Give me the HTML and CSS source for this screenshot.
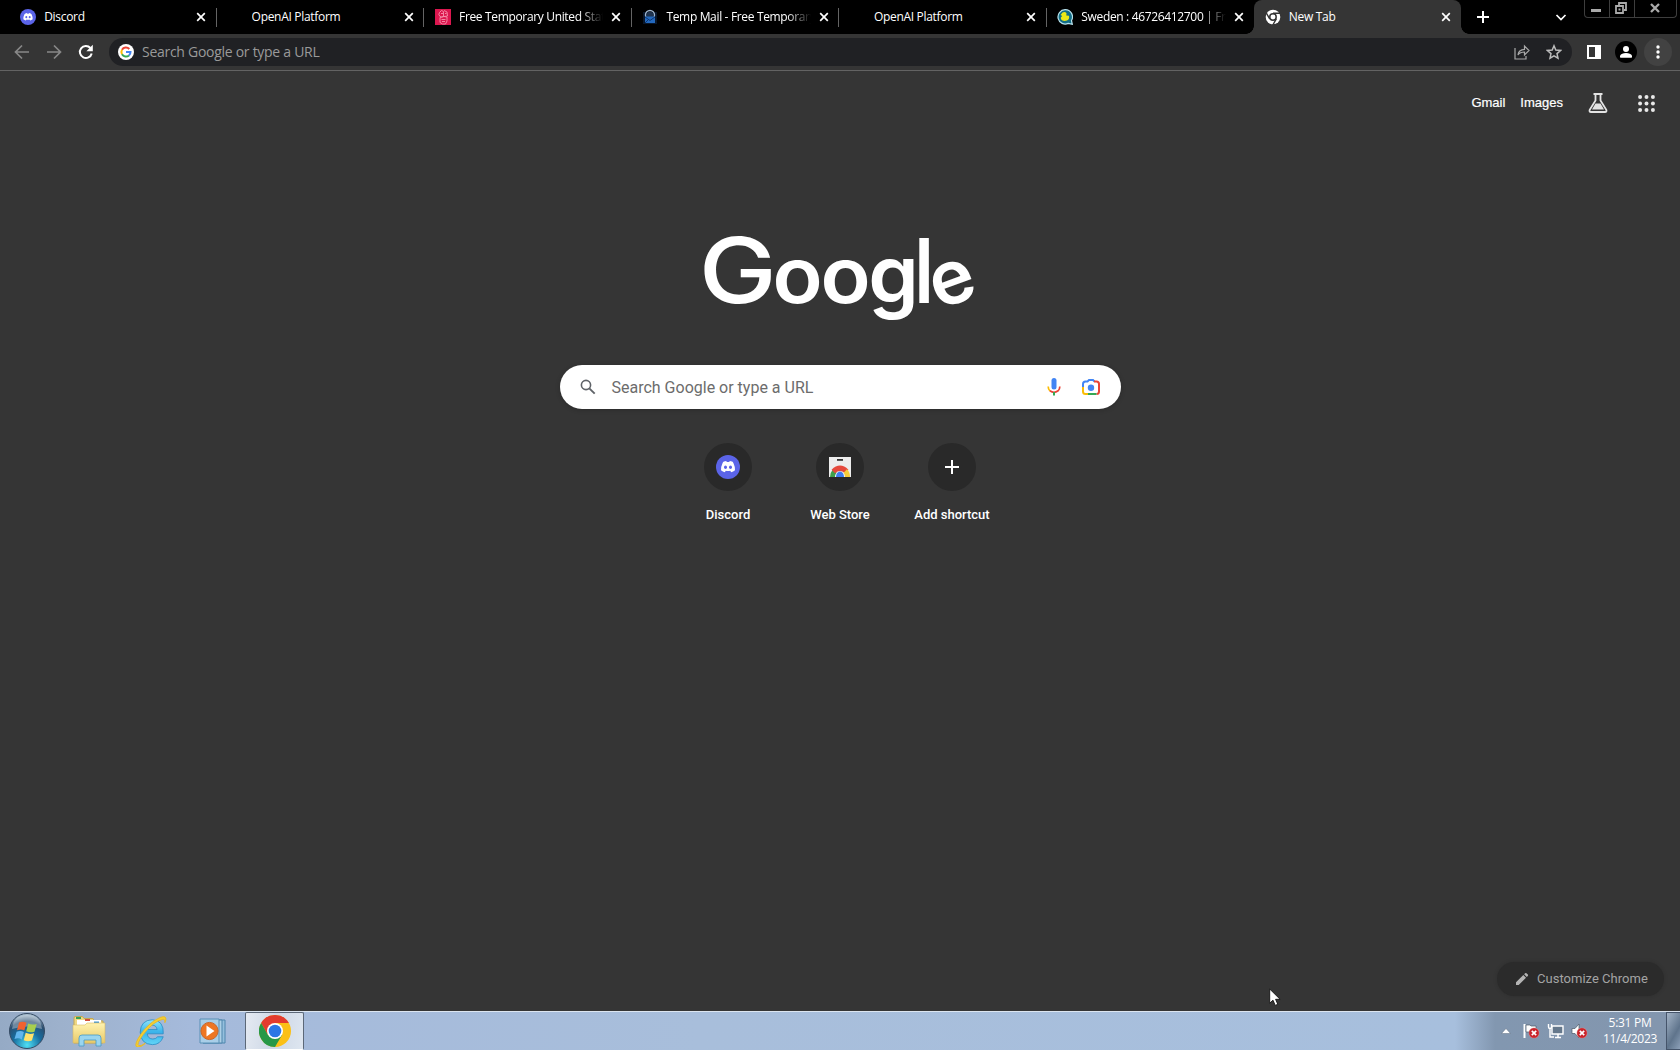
FILE: index.html
```html
<!DOCTYPE html>
<html lang="en">
<head>
<meta charset="utf-8">
<title>New Tab</title>
<link rel="stylesheet" href="styles.css">
</head>
<body>
<svg class="defs" aria-hidden="true">
  <defs>
    <symbol id="discord" viewBox="0 0 24 24">
      <circle cx="12" cy="12" r="12" fill="#5b64e8"/>
      <path fill="#fff" d="M8 6.600 10.200 6l.6 1q1.200-.2 2.400 0l.6-1 2.200.6q1 .4 1.500 1.600 1.700 3.600 1.500 7.100-1.800 1.600-3.800 2l-1-1.600q-2.200.6-4.400 0l-1 1.600q-2-.4-3.800-2-.2-3.500 1.500-7.100Q7 7 8 6.600Z"/>
      <ellipse cx="9.500" cy="12.300" rx="1.500" ry="1.700" fill="#5b64e8"/><ellipse cx="14.500" cy="12.300" rx="1.500" ry="1.700" fill="#5b64e8"/>
    </symbol>
    <symbol id="close" viewBox="0 0 10 10"><path d="M1.200 1.200 8.800 8.800M8.800 1.200 1.200 8.800" stroke="#fff" stroke-width="1.700"/></symbol>
    <symbol id="error" viewBox="0 0 12 12"><circle cx="6" cy="6" r="5.700" fill="#c9252c" stroke="#e9a0a0" stroke-width=".5"/><path d="m3.600 3.600 4.800 4.800m0-4.800L3.600 8.400" stroke="#fff" stroke-width="1.800"/></symbol>
    <radialGradient id="orb" cx=".5" cy=".9" r=".9"><stop offset="0" stop-color="#4fe0f5"/><stop offset=".45" stop-color="#176d9f"/><stop offset=".75" stop-color="#2b4e70"/><stop offset="1" stop-color="#b8cddc"/></radialGradient>
    <linearGradient id="folder" x2="0" y2="1"><stop offset="0" stop-color="#fff3b0"/><stop offset="1" stop-color="#e8c968"/></linearGradient>
    <linearGradient id="ie" x2="0" y2="1"><stop offset="0" stop-color="#8fe4fb"/><stop offset=".5" stop-color="#39b3ea"/><stop offset="1" stop-color="#62d4f7"/></linearGradient>
  </defs>
</svg>

<header class="tabstrip">
  <div class="tabs">
    <div class="tab"><svg class="favicon"><use href="#discord"/></svg><span class="title">Discord</span><svg class="close"><use href="#close"/></svg></div>
    <div class="tab"><span class="favicon"></span><span class="title">OpenAI Platform</span><svg class="close"><use href="#close"/></svg></div>
    <div class="tab"><svg class="favicon" viewBox="0 0 16 16"><path fill="#dc174f" d="M0 0h16v16H0z"/><g fill="none" stroke="#f792ab" stroke-width=".9"><path d="M4.500 3.500q-1.500 2 .5 4 1.500 1 3.500 0V2.500l-2-1zM9 1.500l3 1.500.5 4L9 7.500M5 8.500v5l2.500 1.500h3l1.500-3V8l-3-.5zM6.500 10.500h4M7 12.500h3M6 4.500h2M10 4.500h1.500"/></g></svg><span class="title fade">Free Temporary United States</span><svg class="close"><use href="#close"/></svg></div>
    <div class="tab"><svg class="favicon" viewBox="0 0 16 16"><path fill="#0c1f3c" d="M1 3h14v12H1z" opacity=".7"/><circle cx="8" cy="6" r="4.500" fill="none" stroke="#9db4cd" stroke-width="1.400"/><circle cx="8" cy="6" r="3.200" fill="#20344f"/><path fill="#2368bd" d="M3 7.500h10V14H3z"/><path d="m3 8 5 3.500L13 8M3 14l3.500-3.500" fill="none" stroke="#0b3570"/></svg><span class="title fade">Temp Mail - Free Temporary Email</span><svg class="close"><use href="#close"/></svg></div>
    <div class="tab"><span class="favicon"></span><span class="title">OpenAI Platform</span><svg class="close"><use href="#close"/></svg></div>
    <div class="tab last"><svg class="favicon" viewBox="0 0 16 16"><path d="M8 .7a7.200 7.200 0 1 0 3.300 13.700l4 .9-.8-3.800A7.200 7.200 0 0 0 8 .7Z" fill="#126d86" stroke="#b7e2ed" stroke-width="1.200"/><path d="M5.500 3.500q2.500-1.500 4 .8L9.300 6.600l2.700.2q.8 3.400-2 4.800-4.500 1-6-1.400-1-2 1.200-3.200L3.600 5.900z" fill="#ece817"/></svg><span class="title fade">Sweden : 46726412700 | Free SMS</span><svg class="close"><use href="#close"/></svg></div>
    <div class="tab active">
      <svg class="favicon" viewBox="0 0 16 16"><circle cx="8" cy="8" r="7.300" fill="#fff"/><circle cx="8" cy="8" r="3.200" fill="#fff" stroke="#353535" stroke-width="1.500"/><path d="M8 4.200h7M4.700 9.900 1.200 3.800M11.300 9.900 7.800 16" stroke="#353535" stroke-width="1.400"/></svg>
      <span class="title">New Tab</span><svg class="close"><use href="#close"/></svg></div>
  </div>
  <svg class="newtab" viewBox="0 0 12 12"><path d="M6 0v12M0 6h12" stroke="#fff" stroke-width="2"/></svg>
  <svg class="chevron" viewBox="0 0 12 12"><path d="m1.500 4 4.500 4.500L10.500 4" fill="none" stroke="#fff" stroke-width="1.700"/></svg>
  <div class="winbtns">
    <span><svg viewBox="0 0 14 14"><path fill="#aaa" d="M2 8h10v3H2z"/></svg></span>
    <span><svg viewBox="0 0 14 14"><path d="M5 4V2h7v7h-2M2 5h7v7H2z" fill="none" stroke="#aaa" stroke-width="1.800"/><path fill="#aaa" d="M4.500 7.500h2v2h-2z"/></svg></span>
    <span><svg viewBox="0 0 14 14"><path d="m3 3 8 8m0-8-8 8" stroke="#aaa" stroke-width="2.300"/></svg></span>
  </div>
</header>

<nav class="toolbar">
  <svg class="nav back" viewBox="0 0 16 16"><path d="M15 8H2M8 1.500 1.500 8 8 14.500" fill="none" stroke="#888" stroke-width="1.700"/></svg>
  <svg class="nav fwd" viewBox="0 0 16 16"><path d="M1 8h13M8 1.500 14.500 8 8 14.500" fill="none" stroke="#888" stroke-width="1.700"/></svg>
  <svg class="nav reload" viewBox="0 0 16 16"><path d="M13.700 9.400A6 6 0 1 1 12.400 4" fill="none" stroke="#fff" stroke-width="2"/><path fill="#fff" d="M14.800.8v6.400H8.400z"/></svg>
  <div class="omnibox">
    <svg class="glogo" viewBox="0 0 16 16"><circle cx="8" cy="8" r="8" fill="#fff"/><g fill="none" stroke-width="2"><path d="M11.300 5A4.500 4.500 0 0 0 4 5.800" stroke="#ea4335"/><path d="M4 5.800a4.600 4.600 0 0 0 0 4.500" stroke="#fbbc05"/><path d="M4 10.300a4.500 4.500 0 0 0 7 1.100" stroke="#34a853"/><path d="M8 8.100h4.500q0 2-1.500 3.300" stroke="#4285f4"/></g></svg>
    <span class="hint">Search Google or type a URL</span>
    <svg class="share" viewBox="0 0 16 16"><path d="M1 4v11h11v-3" fill="none" stroke="#a8a8a8" stroke-width="1.200"/><path d="M4 11q.5-5.500 6.500-5.700V2L15 6.500 10.500 11V8Q6 8 4 11Z" fill="none" stroke="#a8a8a8" stroke-width="1.200"/></svg>
    <svg class="star" viewBox="0 0 16 16"><path d="m8 1.800 1.800 4.300 4.700.4L11 9.600l1 4.600L8 11.800l-4 2.400 1-4.600-3.500-3.100 4.700-.4z" fill="none" stroke="#bbb" stroke-width="1.500"/></svg>
  </div>
  <svg class="panel" viewBox="0 0 14 14"><path fill="#fff" d="M0 0h14v14H0z"/><path fill="#353535" d="M2 2h6v10H2z"/></svg>
  <svg class="avatar" viewBox="0 0 22 22"><circle cx="11" cy="11" r="11"/><circle cx="11" cy="8" r="3" fill="#fff"/><path fill="#fff" d="M5 16v-1.500Q6.500 12 11 12t6 2.500V16q0 .7-.7.700H5.700Q5 16.700 5 16Z"/></svg>
  <svg class="menu" viewBox="0 0 28 28"><circle cx="14" cy="14" r="14" fill="#424242"/><g fill="#fff"><circle cx="14" cy="9" r="1.700"/><circle cx="14" cy="14" r="1.700"/><circle cx="14" cy="19" r="1.700"/></g></svg>
</nav>

<main class="page">
  <div class="links">
    <a>Gmail</a><a>Images</a>
    <svg class="flask" viewBox="0 0 20 20"><path d="M5.500 1h9M7.500 1v6.500L1.700 16.800q-.7 2.200 1.300 2.200h14q2 0 1.300-2.200L12.500 7.500V1" fill="none" stroke="#e4e4e4" stroke-width="1.800"/><path fill="#e4e4e4" d="M7.500 10.500h5l3.500 6H4z"/></svg>
    <svg class="apps" viewBox="0 0 18 18"><g fill="#e8e8e8"><circle cx="2.200" cy="2.200" r="2.100"/><circle cx="9" cy="2.200" r="2.100"/><circle cx="15.800" cy="2.200" r="2.100"/><circle cx="2.200" cy="9" r="2.100"/><circle cx="9" cy="9" r="2.100"/><circle cx="15.800" cy="9" r="2.100"/><circle cx="2.200" cy="15.800" r="2.100"/><circle cx="9" cy="15.800" r="2.100"/><circle cx="15.800" cy="15.800" r="2.100"/></g></svg>
  </div>
  <svg class="logo" viewBox="0 0 280 100">
    <text class="big" transform="translate(-4.300 73) scale(1.160 1.010)">G</text>
    <text class="small" transform="translate(69.500 73) scale(1.070 1)">o</text>
    <text class="small" transform="translate(117.500 73) scale(1.070 1)">o</text>
    <text class="small" transform="translate(165.200 73) scale(1.050 1.040)">g</text>
    <text class="tall" transform="translate(210 73) scale(1 1.010)">l</text>
    <text class="small" transform="translate(235.500 80) rotate(-20) scale(.98 .98)">e</text>
  </svg>
  <div class="search">
    <svg class="mag" viewBox="0 0 16 16"><circle cx="6" cy="6" r="4.600" fill="none" stroke="#5f6368" stroke-width="1.600"/><path d="m9.300 9.300 5.400 5.400" stroke="#5f6368" stroke-width="1.900"/></svg>
    <span class="query">Search Google or type a URL</span>
    <svg class="mic" viewBox="0 0 14 18"><rect x="4.500" y="0" width="5" height="11.500" rx="2.500" fill="#4285f4"/><g fill="none" stroke-width="1.700"><path d="M1.200 8.500q0 2.800 1.700 4.300" stroke="#fbbc04"/><path d="M2.900 12.800q4.100 3 8.200 0 1.700-1.500 1.700-4.300" stroke="#ea4335"/><path d="M7 14v3.500" stroke="#34a853" stroke-width="2"/></g></svg>
    <svg class="lens" viewBox="0 0 18 16"><g fill="none" stroke-width="2"><path d="M1 8V5q0-2.500 2.500-2.500h2L7 1h4l1.500 1.500" stroke="#4285f4"/><path d="M12 2.500h2.500Q17 2.500 17 5v7.500q0 2.500-2.500 2.500" stroke="#ea4335"/><path d="M1 8v4.500Q1 15 3.500 15H6" stroke="#fbbc04"/><path d="M6 15h8.500" stroke="#34a853"/></g><circle cx="9" cy="8.800" r="3.200" fill="#4285f4"/></svg>
  </div>
  <div class="tiles">
    <div class="tile"><span class="disc"><svg class="t24"><use href="#discord"/></svg></span><span>Discord</span></div>
    <div class="tile"><span class="disc"><svg class="t24" viewBox="0 0 24 24"><path fill="#ededed" d="M1 2h22v20H1z"/><path fill="#333" d="M9 4h6v1.800H9z"/><path d="M4.500 22a7.500 9 0 0 1 2.200-6" fill="none" stroke="#3fa04b" stroke-width="5"/><path d="M5.300 16.500q6.700-6.500 13.400 0" fill="none" stroke="#e5483c" stroke-width="5"/><path d="M17.300 16q2.200 2 2.200 6" fill="none" stroke="#f6cd3c" stroke-width="5"/><path d="M7.500 22a4.500 5 0 0 1 9 0z" fill="#fff"/><path fill="#3f7df1" d="M8 22a4 5.500 0 0 1 8 0z"/></svg></span><span>Web Store</span></div>
    <div class="tile"><span class="disc"><svg class="plus" viewBox="0 0 14 14"><path d="M7 0v14M0 7h14" stroke="#fff" stroke-width="2"/></svg></span><span>Add shortcut</span></div>
  </div>
  <div class="customize"><svg viewBox="0 0 14 14"><path fill="#b4b4b4" d="M1 10.300 8.300 3l2.700 2.700L3.700 13H1zM9.100 2.200l1-1q.7-.6 1.400 0l1.300 1.300q.6.700 0 1.400l-1 1z"/></svg><span>Customize Chrome</span></div>
</main>

<footer class="taskbar">
  <svg class="start" viewBox="0 0 38 38"><circle cx="19" cy="19" r="17.500" fill="url(#orb)" stroke="#354b64"/><path d="M4 17Q5 3 19 3t15 14q-15-5-30 0Z" fill="#fff" opacity=".32"/><path fill="#ef6230" d="M11 10.500q4-1.800 7.500.3l-2.200 7.800q-3.300-2-7.300-.4z"/><path fill="#a7cf4e" d="M20.200 11.500q4 2 8.500.4l-2.200 7.800q-4.500 1.500-8.300-.4z"/><path fill="#61b6ee" d="M8.600 19.700q4-1.700 7.300.3l-2.100 7.400q-3.400-2-7.300-.3z"/><path fill="#ffe26b" d="M17.700 20.800q4 2 8.400.4l-2.200 7.400q-4.300 1.600-8.200-.4z"/></svg>
  <svg class="explorer" viewBox="0 0 36 32"><path d="M3 3q0-1.500 1.500-1.500h7L13 3.500h9l1 2.500h9v22H3z" fill="#efd885" stroke="#c4a852"/><path d="M6 5h24v7H6z" fill="#fff"/><path d="M5 2h5v2H5z" fill="#39a254"/><path d="M14 4h5v2h-5z" fill="#d1503e"/><path d="M23 6.500h5v2h-5z" fill="#4098d8"/><path d="M2 10h12l2-2h18v20H2z" fill="url(#folder)" stroke="#d7ba64" stroke-width=".6"/><path d="M8 31V23q0-3 3-3h16q3 0 3 3v8h-5v-6H13v6z" fill="#9ad5ef" stroke="#489bc7" stroke-width=".8"/></svg>
  <svg class="ie" viewBox="0 0 34 34"><path d="M30 20H13q.8 5.500 6 5.500 3.400 0 5-2.400h6Q27 31.500 18.500 31.500 6 31 5.500 18.200 6 5.500 18.500 5 31 6 30 20zM13 15.500h10.500q-1-4.700-5.100-4.700-4.300 0-5.400 4.700z" fill="url(#ie)" stroke="#2787c2" stroke-width=".8"/><path d="M8.500 21Q1 31.500 4 32.500q2.500.7 7-2.500-6 5.500-9.500 3.700Q-1 31 6.500 20 15 8.500 24 4q7.500-4 8.700-.8.600 2-1 5 .6-4-2-3.700Q19.500 6.500 8.500 21Z" fill="#f4cf35" stroke="#e6b927" stroke-width="1"/></svg>
  <svg class="wmp" viewBox="0 0 28 28"><path d="M4 3h22v23H4z" fill="#94bfdd" stroke="#4f86ad"/><path d="M4 3h19v23H4z" fill="#aed0e6" stroke="#4f86ad"/><path d="M1 2h19v24H1z" fill="#a8cee8" stroke="#5990b6"/><circle cx="10.500" cy="14" r="8.600" fill="#ee7623" stroke="#c9672a"/><path d="m7.500 8.500 8 5.500-8 5.500z" fill="#fff"/></svg>
  <div class="task"><svg viewBox="0 0 32 32"><circle cx="16" cy="16" r="16" fill="#fbc016"/><path d="M2.140 8A16 16 0 0 1 29.860 8H16L9 20z" fill="#e33b2e"/><path d="M2.140 8A16 16 0 0 0 16 32l7-12H9z" fill="#279847"/><circle cx="16" cy="16" r="8" fill="#fff"/><circle cx="16" cy="16" r="6.300" fill="#2b76e6"/></svg></div>
  <div class="tray">
    <svg class="up" viewBox="0 0 10 6"><path fill="#fff" stroke="#5c6c80" stroke-width=".5" d="M5 .5 9.500 5.500h-9z"/></svg>
    <svg class="ti" viewBox="0 0 17 16"><path d="M1.500 1v14" stroke="#fff" stroke-width="2"/><path d="M3 2h4l1 1h5v7H8L7 9H3z" fill="#fff" stroke="#4c5968" stroke-width=".7"/><use href="#error" x="5.500" y="4.500" width="11" height="11"/></svg>
    <svg class="ti net" viewBox="0 0 17 16"><path d="M5 3h11v8H5z" fill="#65788c" stroke="#fff" stroke-width="1.400"/><path d="M8 14.500h6M11 11v3" stroke="#fff" stroke-width="1.500"/><path d="M1.500 1v3q0 1.500 1.500 1.500T4.500 4V1M3 5.500V14h4" fill="none" stroke="#fff" stroke-width="1.400"/></svg>
    <svg class="ti" viewBox="0 0 17 16"><path fill="#fff" d="M1 5.500h3L8 1v14l-4-4.500H1z" stroke="#4c5968" stroke-width=".7"/><use href="#error" x="5.500" y="4.500" width="11" height="11"/></svg>
    <div class="clock"><span>5:31 PM</span><span>11/4/2023</span></div>
    <div class="desktop"></div>
  </div>
</footer>
<svg class="cursor" viewBox="0 0 12 19"><path d="M.7 1v14.200l3.300-3 2.200 5.200 2.600-1.100-2.200-5h4.500z" fill="#fff" stroke="#111" stroke-width=".9"/></svg>
</body>
</html>
```

FILE: styles.css
```css
* { box-sizing: border-box; }
body {
  margin: 0;
  width: 1680px;
  height: 1050px;
  overflow: hidden;
  display: flex;
  flex-direction: column;
  background: #353535;
  color: #fff;
  font-family: Roboto, "Liberation Sans", sans-serif;
}
svg { display: block; flex: none; }
.defs { position: absolute; width: 0; height: 0; }

/* tab strip */
.tabstrip { height: 34px; flex: none; display: flex; background: #000; padding-left: 9.5px; }
.tabs { display: flex; width: 1452px; }
.tab {
  flex: 1 1 0;
  min-width: 0;
  display: flex;
  align-items: center;
  padding: 0 9.5px 0 10.7px;
  position: relative;
  font: 12px "Open Sans", "Noto Sans", sans-serif;
}
.tab::after { content: ""; position: absolute; right: 0; top: 8px; width: 1px; height: 19px; background: #646464; }
.tab.last::after { display: none; }
.favicon { width: 16px; height: 16px; margin-right: 8px; flex: none; }
.title { flex: 1; min-width: 0; white-space: nowrap; overflow: hidden; letter-spacing: -.3px; line-height: 20px; }
.fade { letter-spacing: -.34px; mask-image: linear-gradient(90deg, #000 calc(100% - 24px), transparent); }
.close { width: 10px; height: 10px; margin: 0 1px 0 8px; }
.active { background: #353535; border-radius: 8px 8px 0 0; }
.active::after, .active::before {
  content: ""; position: absolute; top: auto; bottom: 0; width: 8px; height: 8px;
}
.active::before { left: -8px; background: radial-gradient(circle at 0 0, transparent 7.5px, #353535 8px); }
.active::after { right: -8px; background: radial-gradient(circle at 100% 0, transparent 7.5px, #353535 8px); }
.newtab { width: 12px; height: 12px; margin: 11px 0 0 15.5px; }
.chevron { width: 12px; height: 12px; margin: 11px 0 0 66px; }
.winbtns { display: flex; width: 93px; height: 18px; margin-left: 17px; border: 1px solid #3e3e3e; border-top: 0; border-radius: 0 0 4px 4px; }
.winbtns span { width: 25px; display: flex; justify-content: center; align-items: center; border-right: 1px solid #3e3e3e; }
.winbtns span:last-child { flex: 1; border: 0; }
.winbtns svg { width: 14px; height: 14px; margin: -2px 2px 0 0; }

/* toolbar */
.toolbar { height: 37px; flex: none; display: flex; align-items: center; padding: 0 8px 1px 14px; background: #353535; border-bottom: 1px solid #636363; }
.nav { width: 16px; height: 16px; }
.fwd { margin-left: 16px; }
.reload { margin-left: 16px; }
.omnibox { flex: 1; height: 28px; margin-left: 15px; border-radius: 14px; background: #202124; display: flex; align-items: center; padding: 0 10px 0 9px; }
.glogo { width: 16px; height: 16px; }
.hint { flex: 1; margin-left: 8px; font: 14px "Open Sans", "Noto Sans", sans-serif; letter-spacing: -.28px; color: #9a9a9a; white-space: nowrap; }
.share { width: 16px; height: 16px; }
.star { width: 16px; height: 16px; margin-left: 16px; }
.panel { width: 14px; height: 14px; margin-left: 15px; }
.avatar { width: 22px; height: 22px; margin-left: 14px; }
.menu { width: 28px; height: 28px; margin-left: 7px; }

/* new tab page */
.page { flex: 1; min-height: 0; display: flex; flex-direction: column; align-items: center; background: #353535; }
.links { align-self: flex-end; display: flex; align-items: center; height: 20px; margin: 22px 25px 0 0; font: 13px "Liberation Sans", Arial, sans-serif; -webkit-text-stroke: .2px #fff; }
.links a { margin-top: -2px; }
.links a + a { margin-left: 15px; }
.flask { width: 20px; height: 20px; margin-left: 25px; }
.apps { width: 17px; height: 17px; margin-left: 30px; }
.logo { width: 280px; height: 100px; margin: 117px 0 0 6px; overflow: visible; }
.logo text { font-family: Inter, sans-serif; fill: #fff; }
.big { font-size: 90px; font-weight: 500; }
.small { font-size: 77px; font-weight: 600; }
.tall { font-size: 88px; font-weight: 500; }
.search { width: 561px; height: 44px; margin-top: 35px; border-radius: 22px; background: #fff; display: flex; align-items: center; padding: 0 20px; box-shadow: 0 1px 5px rgba(0,0,0,.2); }
.mag { width: 16px; height: 16px; }
.query { flex: 1; margin-left: 16px; font-size: 16px; color: #6c6c6c; white-space: nowrap; }
.mic { width: 14px; height: 18px; }
.lens { width: 18px; height: 16px; margin: 0 .5px 0 21px; }
.tiles { display: flex; margin-top: 34px; }
.tile { width: 112px; display: flex; flex-direction: column; align-items: center; gap: 16px; font-size: 13px; font-weight: 500; line-height: 15px; }
.disc { width: 48px; height: 48px; border-radius: 50%; background: #292929; display: flex; align-items: center; justify-content: center; }
.t24 { width: 24px; height: 24px; }
.plus { width: 14px; height: 14px; }
.customize { align-self: flex-end; margin: auto 16px 15px 0; width: 167px; height: 34px; border-radius: 17px; background: #2b2b2b; display: flex; align-items: center; padding: 0 0 1px 18px; gap: 8px; font-size: 13px; letter-spacing: .02px; color: #a4a4a4; white-space: nowrap; box-shadow: 0 0 4px rgba(0,0,0,.15); }
.customize svg { width: 14px; height: 14px; }

/* taskbar */
.taskbar { height: 39px; flex: none; display: flex; align-items: center; border-top: 1px solid #dce5f0; background: linear-gradient(90deg, #95aac5 0, #9db1cc 60px, #a5badb 190px, #a8bedb 700px, #a7bfdd 1455px, #8297b0 1495px, #8396ae 1665px); }
.start { width: 38px; height: 38px; margin-left: 8px; }
.explorer { width: 36px; height: 32px; margin-left: 25px; }
.ie { width: 32px; height: 32px; margin-left: 28px; }
.wmp { width: 28px; height: 28px; margin-left: 32px; }
.task { width: 59px; height: 38px; margin-left: 18px; border: 1px solid #5c6878; border-bottom-color: #fff; border-radius: 2px; background: linear-gradient(100deg, #e5eaf2, #ced8e6 50%, #dee6f0); display: flex; align-items: center; justify-content: center; }
.task svg { width: 32px; height: 32px; }
.tray { margin-left: auto; display: flex; align-items: center; height: 38px; }
.up { width: 10px; height: 6px; }
.ti { width: 17px; height: 16px; margin-left: 7px; }
.up + .ti { margin-left: 12px; }
.clock { width: 70px; margin-left: 7px; display: flex; flex-direction: column; align-items: center; font: 12px/16px "Open Sans", "Noto Sans", sans-serif; letter-spacing: -.3px; }
.desktop { width: 14px; height: 38px; margin-left: 1px; border: 1px solid #45546a; border-right: 0; background: linear-gradient(120deg, #a3b3c6, #5f748c 60%, #8ca0b8); }

.cursor { position: absolute; left: 1269px; top: 988px; width: 12px; height: 19px; }
```
